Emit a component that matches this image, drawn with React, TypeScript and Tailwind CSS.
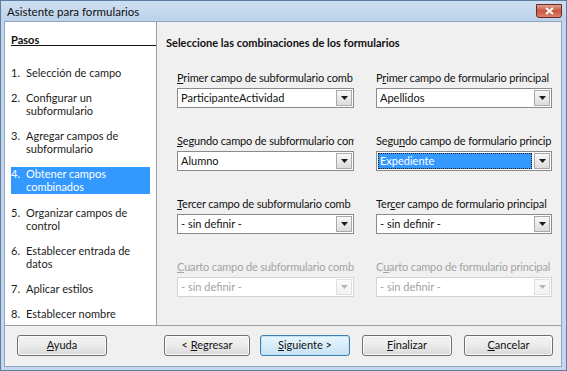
import React from 'react';

const FONT = { fontFamily: 'Lato, "Noto Sans", sans-serif' };

const Arrow = ({ disabled }: { disabled?: boolean }) => (
  <svg width="7" height="4" viewBox="0 0 7 4">
    <path d="M0 0 H7 L3.5 4 Z" fill={disabled ? '#b5b5b5' : '#1b1b1b'} />
  </svg>
);

const Combo = ({ value, disabled, selected }: { value: string; disabled?: boolean; selected?: boolean }) => (
  <div
    className={`h-[20px] flex items-stretch bg-white border p-[1px] ${
      disabled ? 'border-[#d3d3d3]' : 'border-[#8b8b8b]'
    }`}
  >
    <div className="flex-1 pr-[2px]">
      <div
        className={`h-full flex items-center pl-[2px] leading-[14px] ${
          selected
            ? 'bg-[#3399ff] text-white outline outline-1 outline-dotted outline-[#1a1a1a] -outline-offset-1'
            : disabled
              ? 'text-[#a3a3a3]'
              : 'text-[#111]'
        }`}
      >
        {value}
      </div>
    </div>
    <div
      className={`w-[16px] flex items-center justify-center border bg-gradient-to-b ${
        disabled
          ? 'border-[#e0e0e0] from-[#fafafa] to-[#f2f2f2]'
          : 'border-[#a9a9a9] from-[#f8f8f8] to-[#dcdcdc]'
      }`}
    >
      <Arrow disabled={disabled} />
    </div>
  </div>
);

const Field = ({
  before,
  key1,
  after,
  value,
  disabled,
  selected,
}: {
  before: string;
  key1: string;
  after: string;
  value: string;
  disabled?: boolean;
  selected?: boolean;
}) => (
  <div className="flex flex-col min-w-0">
    <div
      className={`leading-[13px] mb-[4px] whitespace-nowrap overflow-hidden tracking-[-0.15px] ${
        disabled ? 'text-[#a3a3a3]' : 'text-[#111]'
      }`}
    >
      {before}
      <span className="underline">{key1}</span>
      {after}
    </div>
    <Combo value={value} disabled={disabled} selected={selected} />
  </div>
);

const Btn = ({
  w,
  pre,
  k,
  post,
  primary,
  className = '',
}: {
  w: string;
  pre?: string;
  k: string;
  post: string;
  primary?: boolean;
  className?: string;
}) => (
  <div
    className={`${w} h-[21px] rounded-[3px] border flex items-center justify-center bg-gradient-to-b text-[#111] ${
      primary
        ? 'border-[#3c7fb1] from-[#eaf6fd] to-[#c7e2f5] shadow-[inset_0_0_0_1px_#bfe3f7]'
        : 'border-[#707070] from-[#f3f3f3] via-[#ebebeb] to-[#d9d9d9] shadow-[inset_0_0_0_1px_#fbfbfb]'
    } ${className}`}
  >
    <span className="whitespace-pre">
      {pre}
      <span className="underline">{k}</span>
      {post}
    </span>
  </div>
);

const steps: { n: string; lines: string[]; active?: boolean }[] = [
  { n: '1.', lines: ['Selección de campo'] },
  { n: '2.', lines: ['Configurar un', 'subformulario'] },
  { n: '3.', lines: ['Agregar campos de', 'subformulario'] },
  { n: '4.', lines: ['Obtener campos', 'combinados'], active: true },
  { n: '5.', lines: ['Organizar campos de', 'control'] },
  { n: '6.', lines: ['Establecer entrada de', 'datos'] },
  { n: '7.', lines: ['Aplicar estilos'] },
  { n: '8.', lines: ['Establecer nombre'] },
];

export default function App() {
  return (
    <div
      className="w-[567px] h-[371px] flex flex-col bg-[#c4d7ed] border border-[#5f7d9f] text-[11px] overflow-hidden"
      style={FONT}
    >
      {/* Title bar */}
      <div className="h-[20px] flex items-center justify-between pl-[6px] pr-[4px] bg-gradient-to-b from-[#cddff2] to-[#bcd2ea]">
        <span className="text-[11.5px] text-[#0f0f0f] leading-[14px] mt-[1px]">Asistente para formularios</span>
        <div className="w-[26px] h-[14px] rounded-b-[3px] border border-[#6b2a2a] bg-gradient-to-b from-[#e0a08f] via-[#c9553f] to-[#d9826f] flex items-center justify-center">
          <svg width="9" height="8" viewBox="0 0 9 8">
            <path d="M1 1 L8 7 M8 1 L1 7" stroke="#fff" strokeWidth="2" />
          </svg>
        </div>
      </div>

      {/* Body */}
      <div className="flex-1 flex flex-col ml-[3px] mr-[4px] mb-[3px] border border-[#8ea6c2] bg-[#f0f0f0]">
        <div className="h-[304px] flex border-b border-[#a0a0a0]">
          {/* Sidebar */}
          <div className="w-[152px] bg-white border-r border-[#a0a0a0] pt-[12px]">
            <div className="ml-[6px] h-[12px] leading-[11px] border-b border-[#111] font-bold text-[#111]">
              Pasos
            </div>
            <div className="mt-[20px] flex flex-col gap-[12px] ml-[6px] mr-[6px] text-[#1c1c1c]">
              {steps.map((s) => (
                <div
                  key={s.n}
                  className={`flex leading-[13px] ${s.active ? 'bg-[#3399ff] text-white pb-[1px]' : ''}`}
                >
                  <span className="w-[15px] shrink-0">{s.n}</span>
                  <div className="flex flex-col">
                    {s.lines.map((l) => (
                      <span key={l}>{l}</span>
                    ))}
                  </div>
                </div>
              ))}
            </div>
          </div>

          {/* Panel */}
          <div className="flex-1 pt-[14px]">
            <div className="pl-[9px] font-bold leading-[13px] text-[#111]">
              Seleccione las combinaciones de los formularios
            </div>
            <div className="mt-[22px] ml-[20px] grid grid-cols-[177px_176px] gap-x-[22px] gap-y-[26px]">
              <Field before="" key1="P" after="rimer campo de subformulario comb" value="ParticipanteActividad" />
              <Field before="P" key1="r" after="imer campo de formulario principal" value="Apellidos" />
              <Field before="" key1="S" after="egundo campo de subformulario com" value="Alumno" />
              <Field before="Segu" key1="n" after="do campo de formulario princip" value="Expediente" selected />
              <Field before="" key1="T" after="ercer campo de subformulario comb" value="- sin definir -" />
              <Field before="Ter" key1="c" after="er campo de formulario principal" value="- sin definir -" />
              <Field before="" key1="C" after="uarto campo de subformulario comb" value="- sin definir -" disabled />
              <Field before="C" key1="u" after="arto campo de formulario principal" value="- sin definir -" disabled />
            </div>
          </div>
        </div>

        {/* Buttons */}
        <div className="flex-1 flex items-start pt-[9px] pl-[12px]">
          <Btn w="w-[90px]" k="A" post="yuda" />
          <Btn w="w-[86px]" pre="< " k="R" post="egresar" className="ml-[57px]" />
          <Btn w="w-[90px]" k="S" post="iguiente >" primary className="ml-[10px]" />
          <Btn w="w-[90px]" k="F" post="inalizar" className="ml-[12px]" />
          <Btn w="w-[89px]" k="C" post="ancelar" className="ml-[12px]" />
        </div>
      </div>
    </div>
  );
}
